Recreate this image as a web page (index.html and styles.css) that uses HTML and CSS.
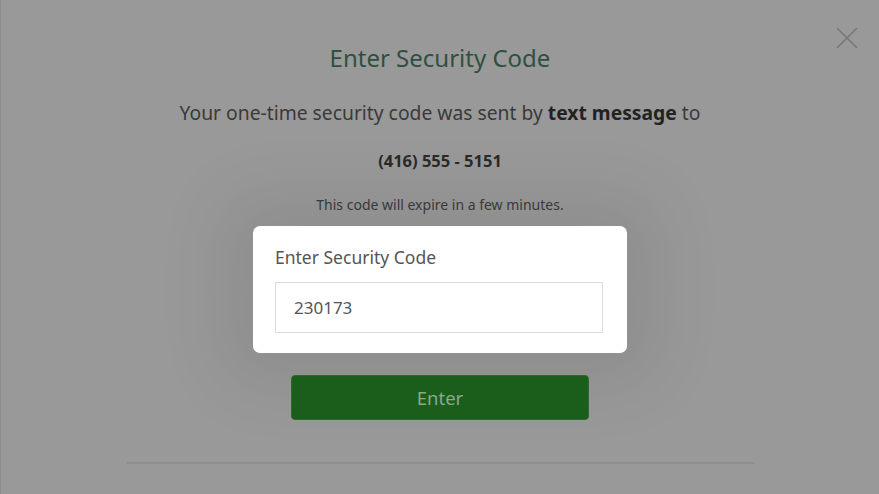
FILE: index.html
```html
<!DOCTYPE html>
<html lang="en">
<head>
<meta charset="utf-8">
<title>Enter Security Code</title>
<link rel="stylesheet" href="styles.css">
</head>
<body>
<div class="modal">
  <button class="close" aria-label="Close">
    <svg width="24" height="24" viewBox="0 0 24 24"><path d="M2 2 L22 22 M22 2 L2 22" stroke="#777" stroke-width="1.6" fill="none"/></svg>
  </button>
  <h1 class="title">Enter Security Code</h1>
  <p class="lead">Your one-time security code was sent by <b>text message</b> to</p>
  <p class="phone">(416) 555 - 5151</p>
  <p class="note">This code will expire in a few minutes.</p>
  <div class="spot">
    <label class="field-label" for="code">Enter Security Code</label>
    <div class="field-input" id="code">230173</div>
  </div>
  <button class="enter">Enter</button>
  <div class="divider"></div>
</div>
</body>
</html>
```
FILE: styles.css
```css
html, body {
  margin: 0;
  padding: 0;
  background: #999999;
  overflow: hidden;
}
body {
  font-family: "Noto Sans", "Open Sans", sans-serif;
}
.modal {
  position: relative;
  width: 879px;
  height: 494px;
  box-sizing: border-box;
  border-left: 1px solid #8c8c8c;
  background: #999999;
  display: flex;
  flex-direction: column;
  align-items: center;
  overflow: hidden;
}
.close {
  position: absolute;
  top: 26px;
  right: 20px;
  width: 24px;
  height: 24px;
  padding: 0;
  border: 0;
  background: transparent;
  display: flex;
}
.title {
  margin: 40px 0 0;
  font-size: 24px;
  line-height: 36px;
  font-weight: 400;
  color: #2f5040;
}
.lead {
  margin: 24px 0 0;
  font-size: 19.3px;
  line-height: 26px;
  color: #3a3a3a;
}
.lead b {
  font-weight: 700;
  color: #222;
}
.phone {
  margin: 25px 0 0;
  font-size: 16.5px;
  line-height: 20px;
  font-weight: 700;
  color: #2a2a2a;
}
.note {
  margin: 25px 0 0;
  font-size: 14px;
  line-height: 18px;
  color: #3c3c3c;
}
.spot {
  margin-top: 12px;
  width: 374px;
  height: 127px;
  box-sizing: border-box;
  padding: 18px 24px 20px 22px;
  background: #ffffff;
  border-radius: 7px;
  display: flex;
  flex-direction: column;
  box-shadow: 0 0 70px 30px rgba(0, 0, 0, 0.08);
}
.field-label {
  font-size: 17.5px;
  line-height: 26px;
  color: #555555;
}
.field-input {
  margin-top: 12px;
  height: 51px;
  box-sizing: border-box;
  border: 1.5px solid #dcdcdc;
  padding: 0 18px;
  display: flex;
  align-items: center;
  font-size: 17px;
  color: #555555;
}
.enter {
  margin-top: 22px;
  width: 298px;
  height: 45px;
  border: 1px solid #2a6a2a;
  border-radius: 4px;
  background: #1b5e1b;
  color: #8aa88a;
  font-family: inherit;
  font-size: 18.5px;
  padding: 0;
}
.divider {
  margin-top: 42px;
  width: 627px;
  height: 2px;
  background: #8e8e8e;
}
```
